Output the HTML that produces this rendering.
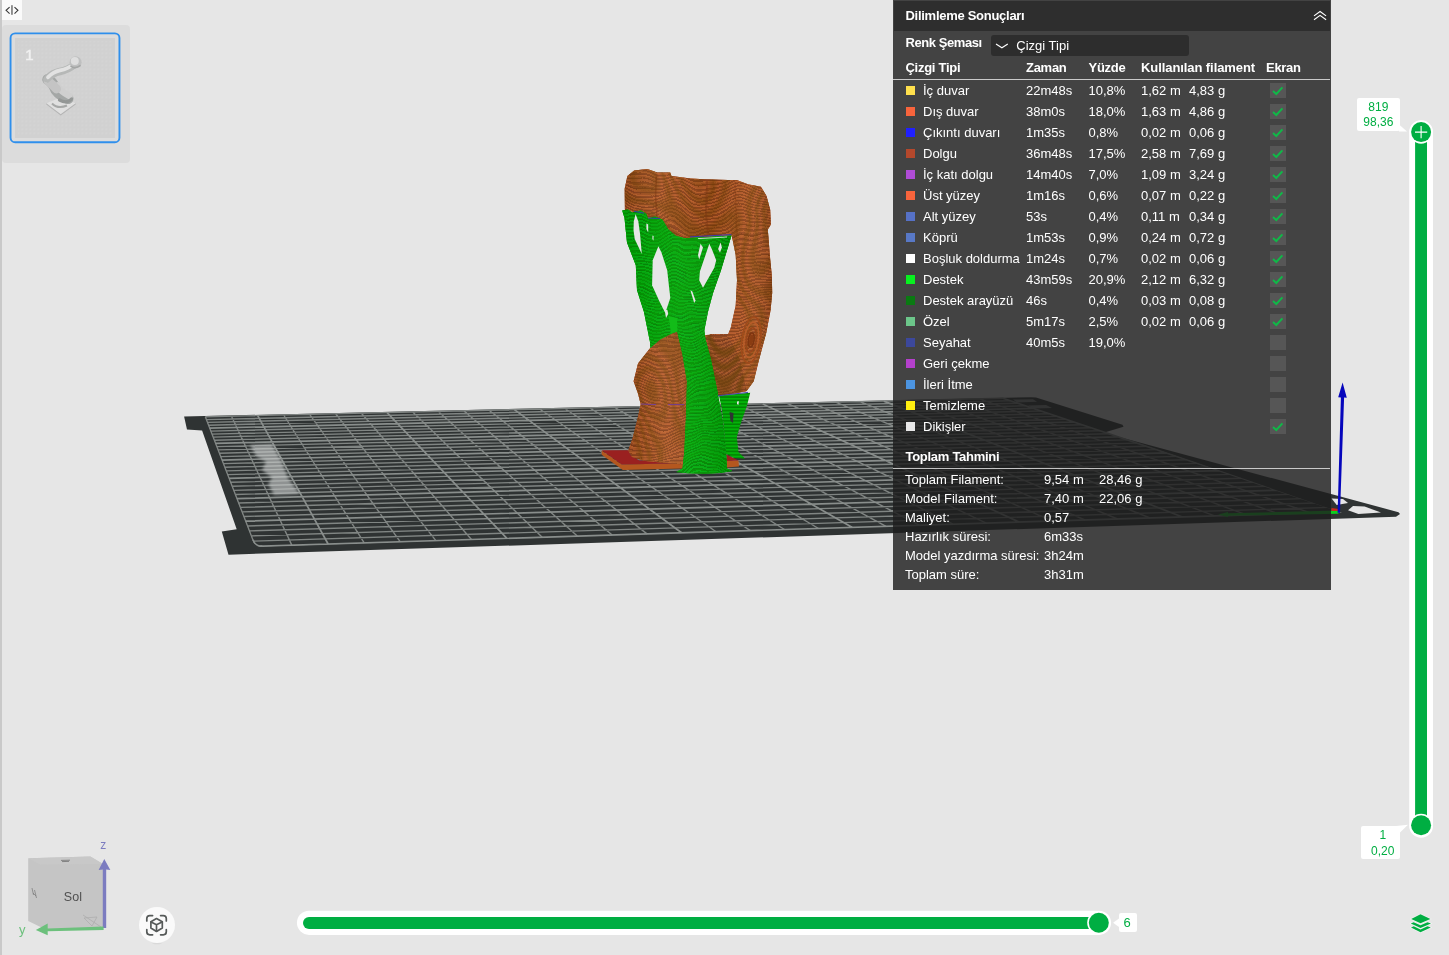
<!DOCTYPE html>
<html lang="tr">
<head>
<meta charset="utf-8">
<title>Önizleme</title>
<style>
*{box-sizing:border-box;margin:0;padding:0}
html,body{width:1449px;height:955px;overflow:hidden;background:#e6e6e6;font-family:"Liberation Sans",sans-serif;}
#app{position:relative;width:1449px;height:955px;overflow:hidden;background:#e6e6e6}
.abs{position:absolute}
#leftstrip{left:0;top:0;width:2px;height:955px;background:#c9c9c9}
#colbtn{left:2px;top:0;width:20px;height:20px;background:#fafafa}
#thumbs{left:2px;top:25px;width:128px;height:138px;background:#dcdcdc;border-radius:4px}
#thumb{left:9.5px;top:32.5px;width:111px;height:111px;border:2px solid #2f8fec;border-radius:5.5px}
#thumbimg{left:15px;top:38px;width:100px;height:100px}
#scene{left:0;top:0;width:1449px;height:955px}
#legend{will-change:transform;left:893px;top:0;width:438px;height:590px;background:rgba(30,30,30,.815);color:#fff;font-size:13px}
#legend .hdr{left:.7px;top:1px;width:436.6px;height:29.8px;background:#2e2e2e}
#legend .t{position:absolute;white-space:nowrap;line-height:16px;height:16px}
#legend .b{font-weight:bold;letter-spacing:-.28px}
#legend .sep{position:absolute;left:0;width:438px;height:1px;background:rgba(255,255,255,.72)}
#legend .sw{position:absolute;left:13px;width:9px;height:9px}
#legend .cb{position:absolute;left:377.3px;width:15.5px;height:15px;background:rgba(255,255,255,.1)}
#legend .cb svg{display:block}
#legend .dd{position:absolute;left:98px;top:35px;width:198px;height:21px;background:#2d2d2d;border-radius:3px}
.g{color:#00ae42}
.lbl{will-change:transform;position:absolute;background:#fff;border-radius:2px;color:#00ae42;font-size:12px;text-align:center;line-height:15px}
</style>
</head>
<body>
<div id="app">
<svg id="scene" class="abs" width="1449" height="955" viewBox="0 0 1449 955">
<defs>
<pattern id="pb" width="6" height="3.4" patternUnits="userSpaceOnUse"><rect width="6" height="3.4" fill="#bc5e2c"/><rect y="1.9" width="6" height="1.5" fill="#853c17"/></pattern>
<pattern id="pg" width="6" height="3.4" patternUnits="userSpaceOnUse"><rect width="6" height="3.4" fill="#04b30a"/><rect y="1.9" width="6" height="1.5" fill="#008202"/></pattern>
<filter id="wav" x="-5%" y="-5%" width="110%" height="110%"><feTurbulence type="fractalNoise" baseFrequency="0.022 0.014" numOctaves="2" seed="4" result="n"/><feDisplacementMap in="SourceGraphic" in2="n" scale="34" xChannelSelector="R" yChannelSelector="G"/></filter>
<filter id="moire" x="0" y="0" width="100%" height="100%"><feTurbulence type="fractalNoise" baseFrequency="0.02 0.014" numOctaves="1" seed="21" result="n"/><feColorMatrix in="n" type="matrix" values="0 0 0 0 0.16  0 0 0 0 0.05  0 0 0 0 0  2.2 0 0 0 -0.6" result="a"/><feComponentTransfer in="a"><feFuncA type="table" tableValues="0 .5 0 .5 0 .5 0 .5 0 .5 0"/></feComponentTransfer></filter>
<filter id="moireg" x="0" y="0" width="100%" height="100%"><feTurbulence type="fractalNoise" baseFrequency="0.024 0.014" numOctaves="1" seed="5" result="n"/><feColorMatrix in="n" type="matrix" values="0 0 0 0 0  0 0 0 0 0.36  0 0 0 0 0  2.2 0 0 0 -0.6" result="a"/><feComponentTransfer in="a"><feFuncA type="table" tableValues="0 .55 0 .55 0 .55 0 .55 0 .55 0"/></feComponentTransfer></filter>
<filter id="wav2" x="-5%" y="-5%" width="110%" height="110%"><feTurbulence type="fractalNoise" baseFrequency="0.03 0.016" numOctaves="2" seed="9" result="n"/><feDisplacementMap in="SourceGraphic" in2="n" scale="30" xChannelSelector="R" yChannelSelector="G"/></filter>
<filter id="bl"><feGaussianBlur stdDeviation="1.6"/></filter>
<linearGradient id="shb" x1="0" x2="1" y1="0" y2="0"><stop offset="0" stop-color="#000" stop-opacity=".10"/><stop offset=".25" stop-color="#fff" stop-opacity=".06"/><stop offset=".6" stop-color="#000" stop-opacity=".06"/><stop offset=".85" stop-color="#fff" stop-opacity=".05"/><stop offset="1" stop-color="#000" stop-opacity=".12"/></linearGradient>
<linearGradient id="shb2" x1="0" x2="1" y1="0" y2="0"><stop offset="0" stop-color="#000" stop-opacity=".08"/><stop offset=".3" stop-color="#fff" stop-opacity=".07"/><stop offset="1" stop-color="#000" stop-opacity=".10"/></linearGradient>
<linearGradient id="shg" x1="0" x2="1" y1="0" y2="0"><stop offset="0" stop-color="#000" stop-opacity=".06"/><stop offset=".5" stop-color="#fff" stop-opacity=".05"/><stop offset="1" stop-color="#000" stop-opacity=".10"/></linearGradient>
<clipPath id="gridclip"><path d="M205.3,416.8 L1003.0,398.3 L1342.0,511.9 L255.4,546.3 Z"/></clipPath>
</defs>
<path d="M184.1,416.5 L1031.0,397.2 L1036.0,397.6 L1122.5,424.8 L1123.5,426.8 L1103.5,432.8 L1398.5,512.2 L1400.0,514.0 L1396.0,516.8 L228.5,554.7 L221.8,531.6 L236.7,529.2 L202.1,430.6 L187.0,429.6 Z" fill="#2f3333"/>
<path d="M1331.6,498.4 L1343,499 L1348,503 L1336.7,505 Z" fill="#e6e6e6"/>
<path d="M1353,506 L1364.6,506.6 L1381,512.4 L1358.4,514 L1348,510.3 Z" fill="#e6e6e6"/>
<path d="M1013,399.6 L1033,399.2 L1037,401.8 L1017,402.4 Z" fill="#8a8e8e"/>
<path d="M1028,405.4 L1046,405 L1052,408 L1034,408.6 Z" fill="#8a8e8e"/>
<clipPath id="gclip"><path d="M203.3,414.8 L1006.0,396.3 L1345.0,513.9 L262.4,547.3 Q254.8,546.9 251.7,539.7 Z"/></clipPath>
<g clip-path="url(#gclip)">
<path d="M205.3,416.8 L255.4,546.3 M231.5,416.2 L291.8,545.1 M283.7,415.0 L364.2,542.9 M309.7,414.4 L400.1,541.7 M335.6,413.8 L435.9,540.6 M361.4,413.2 L471.5,539.5 M412.7,412.0 L542.2,537.2 M438.3,411.4 L577.3,536.1 M463.7,410.8 L612.2,535.0 M489.1,410.2 L647.0,533.9 M539.6,409.0 L716.1,531.7 M564.7,408.5 L750.4,530.6 M589.7,407.9 L784.5,529.5 M614.7,407.3 L818.5,528.5 M664.4,406.2 L886.0,526.3 M689.1,405.6 L919.6,525.3 M713.7,405.0 L952.9,524.2 M738.2,404.4 L986.2,523.2 M787.1,403.3 L1052.2,521.1 M811.4,402.7 L1085.0,520.0 M835.6,402.2 L1117.6,519.0 M859.8,401.6 L1150.1,518.0 M907.8,400.5 L1214.6,515.9 M931.7,400.0 L1246.7,514.9 M955.6,399.4 L1278.6,513.9 M979.3,398.8 L1310.4,512.9 M205.3,416.8 L1003.0,398.3 M206.4,419.6 L1010.4,400.8 M207.4,422.4 L1017.8,403.3 M208.6,425.2 L1025.4,405.8 M210.8,431.1 L1041.0,411.0 M212.0,434.1 L1049.0,413.7 M213.2,437.1 L1057.1,416.4 M214.4,440.2 L1065.3,419.2 M216.8,446.6 L1082.2,424.8 M218.1,449.9 L1090.9,427.7 M219.4,453.2 L1099.7,430.7 M220.7,456.6 L1108.7,433.7 M223.4,463.6 L1127.1,439.9 M224.8,467.2 L1136.6,443.1 M226.2,470.9 L1146.2,446.3 M227.7,474.6 L1156.1,449.6 M230.7,482.3 L1176.3,456.4 M232.2,486.3 L1186.6,459.8 M233.8,490.4 L1197.2,463.4 M235.4,494.5 L1208.0,467.0 M238.7,503.0 L1230.2,474.4 M240.4,507.4 L1241.7,478.3 M242.1,511.9 L1253.3,482.2 M243.9,516.5 L1265.2,486.2 M247.5,526.0 L1289.8,494.4 M249.4,530.9 L1302.4,498.6 M251.4,535.9 L1315.3,503.0 M253.4,541.1 L1328.5,507.4" fill="none" stroke="#808583" stroke-width="1.4"/>
<path d="M257.7,415.6 L328.1,544.0 M387.1,412.6 L506.9,538.3 M514.4,409.6 L681.6,532.8 M639.6,406.7 L852.4,527.4 M762.7,403.9 L1019.2,522.1 M883.8,401.1 L1182.4,517.0 M1003.0,398.3 L1342.0,511.9 M209.7,428.1 L1033.1,408.4 M215.6,443.4 L1073.7,422.0 M222.0,460.1 L1117.8,436.8 M229.1,478.4 L1166.1,452.9 M237.0,498.7 L1219.0,470.7 M245.7,521.2 L1277.4,490.2 M255.4,546.3 L1342.0,511.9" fill="none" stroke="#898e8c" stroke-width="1.7"/>
</g>
<path d="M262.4,546.1 Q255.4,546.3 252.9,539.7" fill="none" stroke="#898e8c" stroke-width="1.5"/>
<path d="M250,445 L272,444 L282,462 L288,478 L300,494 L274,495 L268,484 L272,478 L262,470 L266,462 L256,456 Z" fill="#cfd2d1" opacity=".6" filter="url(#bl)"/>
<g id="model">
<path d="M601.7,450.6 L621.7,464.6 L682.7,463.2 L726.7,461.1 L738.5,460.5 L739.0,466.4 L726.7,467.4 L682.7,468.6 L622.9,469.9 L601.7,454.8 Z" fill="#b4571f"/>
<path d="M601.7,450.3 L628.7,450.3 L630.5,455.2 L639.3,460.5 L682.7,459.9 L682.7,463.2 L621.7,464.6 Z" fill="#9a2020"/>
<path d="M726.2,454.6 L738.5,460.5 L726.7,461.1 Z" fill="#9a2020"/>
<path d="M719.0,395.5 L750.2,392.8 L746.9,406.0 L741.0,422.7 L736.8,437.0 L738.5,452.0 L745.2,458.7 L734.0,458.0 L726.0,453.7 L724.0,430.0 L722.0,410.0 Z" fill="url(#pg)"/>
<path d="M729.5,412.0 L733.5,413.0 L733.0,423.0 L730.5,421.0 Z" fill="#2f3333"/>
<path d="M737.0,401.5 L739.0,401.3 L738.4,405.0 L737.0,404.0 Z" fill="#e6e6e6"/>
<clipPath id="ctop"><path d="M624.9,209.7 L624.7,188.6 L627.4,176.1 L634.2,170.6 L647.3,168.9 L657.2,172.4 L670.2,172.4 L671.5,176.1 L690.7,178.6 L704.4,179.3 L728.0,179.9 L736.7,179.9 L747.9,184.2 L760.9,186.7 L766.5,196.0 L770.2,209.7 L770.9,224.6 L767.8,229.6 L770.2,259.4 L771.8,275.0 L772.2,292.8 L770.6,310.0 L766.2,333.1 L759.0,359.8 L753.7,381.2 L746.6,391.0 L735.0,393.5 L718.0,395.4 L716.0,388.0 L712.0,370.0 L706.0,352.0 L704.0,338.0 L710.6,334.3 L728.1,334.3 L730.7,328.0 L735.7,305.4 L737.0,280.3 L735.7,255.1 L731.9,236.3 L730.5,235.2 L697.0,237.6 L684.5,238.3 L675.8,235.8 L668.4,229.6 L662.2,219.6 L647.3,217.8 L634.8,212.2 Z"/></clipPath>
<path d="M624.9,209.7 L624.7,188.6 L627.4,176.1 L634.2,170.6 L647.3,168.9 L657.2,172.4 L670.2,172.4 L671.5,176.1 L690.7,178.6 L704.4,179.3 L728.0,179.9 L736.7,179.9 L747.9,184.2 L760.9,186.7 L766.5,196.0 L770.2,209.7 L770.9,224.6 L767.8,229.6 L770.2,259.4 L771.8,275.0 L772.2,292.8 L770.6,310.0 L766.2,333.1 L759.0,359.8 L753.7,381.2 L746.6,391.0 L735.0,393.5 L718.0,395.4 L716.0,388.0 L712.0,370.0 L706.0,352.0 L704.0,338.0 L710.6,334.3 L728.1,334.3 L730.7,328.0 L735.7,305.4 L737.0,280.3 L735.7,255.1 L731.9,236.3 L730.5,235.2 L697.0,237.6 L684.5,238.3 L675.8,235.8 L668.4,229.6 L662.2,219.6 L647.3,217.8 L634.8,212.2 Z" fill="#a85024"/>
<g clip-path="url(#ctop)"><rect x="600" y="150" width="200" height="270" fill="url(#pb)" filter="url(#wav)"/></g>
<clipPath id="clow"><path d="M728.1,334.3 L705.7,334.9 L677.9,331.8 L672.8,333.0 L660.3,339.3 L650.2,348.1 L638.0,363.4 L633.6,381.2 L638.0,393.6 L640.7,404.3 L637.2,420.3 L632.7,438.1 L628.3,450.6 L632.0,457.0 L645.0,461.0 L683.0,464.5 L722.0,462.0 L721.0,440.0 L718.5,410.0 L717.0,395.4 L735.0,393.0 L746.6,391.0 L740.0,360.0 Z"/></clipPath>
<path d="M728.1,334.3 L705.7,334.9 L677.9,331.8 L672.8,333.0 L660.3,339.3 L650.2,348.1 L638.0,363.4 L633.6,381.2 L638.0,393.6 L640.7,404.3 L637.2,420.3 L632.7,438.1 L628.3,450.6 L632.0,457.0 L645.0,461.0 L683.0,464.5 L722.0,462.0 L721.0,440.0 L718.5,410.0 L717.0,395.4 L735.0,393.0 L746.6,391.0 L740.0,360.0 Z" fill="#a85024"/>
<g clip-path="url(#clow)"><rect x="600" y="310" width="200" height="180" fill="url(#pb)" filter="url(#wav)"/></g>
<g clip-path="url(#ctop)"><rect x="600" y="150" width="200" height="270" fill="#000" filter="url(#moire)"/></g>
<g clip-path="url(#clow)"><rect x="600" y="310" width="200" height="180" fill="#000" filter="url(#moire)"/></g>
<path d="M624.9,209.7 L624.7,188.6 L627.4,176.1 L634.2,170.6 L647.3,168.9 L657.2,172.4 L670.2,172.4 L671.5,176.1 L690.7,178.6 L704.4,179.3 L728.0,179.9 L736.7,179.9 L747.9,184.2 L760.9,186.7 L766.5,196.0 L770.2,209.7 L770.9,224.6 L767.8,229.6 L770.2,259.4 L771.8,275.0 L772.2,292.8 L770.6,310.0 L766.2,333.1 L759.0,359.8 L753.7,381.2 L746.6,391.0 L735.0,393.5 L718.0,395.4 L716.0,388.0 L712.0,370.0 L706.0,352.0 L704.0,338.0 L710.6,334.3 L728.1,334.3 L730.7,328.0 L735.7,305.4 L737.0,280.3 L735.7,255.1 L731.9,236.3 L730.5,235.2 L697.0,237.6 L684.5,238.3 L675.8,235.8 L668.4,229.6 L662.2,219.6 L647.3,217.8 L634.8,212.2 Z" fill="url(#shb)"/>
<path d="M728.1,334.3 L705.7,334.9 L677.9,331.8 L672.8,333.0 L660.3,339.3 L650.2,348.1 L638.0,363.4 L633.6,381.2 L638.0,393.6 L640.7,404.3 L637.2,420.3 L632.7,438.1 L628.3,450.6 L632.0,457.0 L645.0,461.0 L683.0,464.5 L722.0,462.0 L721.0,440.0 L718.5,410.0 L717.0,395.4 L735.0,393.0 L746.6,391.0 L740.0,360.0 Z" fill="url(#shb2)"/>
<path d="M656.5,174 L655.5,196 L657,217" stroke="#7a3612" stroke-width="1.6" fill="none" opacity=".45"/>
<path d="M707,181 L706,215 L708.5,236" stroke="#7a3612" stroke-width="2" fill="none" opacity=".45"/>
<path d="M735,182 L737,236" stroke="#7a3612" stroke-width="1.4" fill="none" opacity=".3"/>
<ellipse cx="751.2" cy="340" rx="9.3" ry="23.2" fill="none" stroke="#a04a1a" stroke-width="1.6" transform="rotate(8 751.2 340)"/>
<ellipse cx="751.2" cy="340" rx="7.1" ry="17.8" fill="none" stroke="#b85c28" stroke-width="1.6" transform="rotate(8 751.2 340)"/>
<ellipse cx="751.2" cy="340" rx="5.0" ry="12.4" fill="none" stroke="#9a4518" stroke-width="1.6" transform="rotate(8 751.2 340)"/>
<ellipse cx="751.2" cy="340" rx="2.8" ry="7.0" fill="none" stroke="#7e3510" stroke-width="1.6" transform="rotate(8 751.2 340)"/>
<ellipse cx="751.2" cy="340" rx="2" ry="5.5" fill="#8a3c12" transform="rotate(8 751.2 340)"/>
<clipPath id="cgr"><path d="M622.2,210.5 L628.0,209.5 L632.0,212.5 L635.6,211.4 L641.0,210.5 L646.3,214.0 L648.0,218.5 L655.0,216.5 L662.3,219.6 L668.4,229.6 L675.8,235.8 L684.5,238.3 L697.0,237.6 L731.3,235.6 L731.3,236.3 L725.6,255.1 L720.6,271.5 L713.1,292.8 L708.0,311.7 L704.3,330.6 L705.5,339.4 L711.0,359.8 L717.2,390.0 L722.6,420.3 L726.1,452.3 L727.0,468.4 L732.3,471.0 L720.0,473.0 L703.9,473.7 L688.0,473.2 L676.3,472.0 L682.5,468.4 L684.3,452.3 L686.0,416.8 L687.0,381.2 L682.5,354.5 L677.2,331.4 L672.8,333.0 L660.3,339.3 L650.2,348.1 L650.2,343.1 L643.9,311.7 L637.0,290.3 L635.8,265.2 L627.0,242.6 L625.7,230.0 L624.5,218.0 Z"/></clipPath>
<path d="M622.2,210.5 L628.0,209.5 L632.0,212.5 L635.6,211.4 L641.0,210.5 L646.3,214.0 L648.0,218.5 L655.0,216.5 L662.3,219.6 L668.4,229.6 L675.8,235.8 L684.5,238.3 L697.0,237.6 L731.3,235.6 L731.3,236.3 L725.6,255.1 L720.6,271.5 L713.1,292.8 L708.0,311.7 L704.3,330.6 L705.5,339.4 L711.0,359.8 L717.2,390.0 L722.6,420.3 L726.1,452.3 L727.0,468.4 L732.3,471.0 L720.0,473.0 L703.9,473.7 L688.0,473.2 L676.3,472.0 L682.5,468.4 L684.3,452.3 L686.0,416.8 L687.0,381.2 L682.5,354.5 L677.2,331.4 L672.8,333.0 L660.3,339.3 L650.2,348.1 L650.2,343.1 L643.9,311.7 L637.0,290.3 L635.8,265.2 L627.0,242.6 L625.7,230.0 L624.5,218.0 Z" fill="#00a000"/>
<g clip-path="url(#cgr)"><rect x="600" y="190" width="160" height="300" fill="url(#pg)" filter="url(#wav2)"/></g>
<g clip-path="url(#cgr)"><rect x="600" y="190" width="160" height="300" fill="#000" filter="url(#moireg)"/></g>
<path d="M622.2,210.5 L628.0,209.5 L632.0,212.5 L635.6,211.4 L641.0,210.5 L646.3,214.0 L648.0,218.5 L655.0,216.5 L662.3,219.6 L668.4,229.6 L675.8,235.8 L684.5,238.3 L697.0,237.6 L731.3,235.6 L731.3,236.3 L725.6,255.1 L720.6,271.5 L713.1,292.8 L708.0,311.7 L704.3,330.6 L705.5,339.4 L711.0,359.8 L717.2,390.0 L722.6,420.3 L726.1,452.3 L727.0,468.4 L732.3,471.0 L720.0,473.0 L703.9,473.7 L688.0,473.2 L676.3,472.0 L682.5,468.4 L684.3,452.3 L686.0,416.8 L687.0,381.2 L682.5,354.5 L677.2,331.4 L672.8,333.0 L660.3,339.3 L650.2,348.1 L650.2,343.1 L643.9,311.7 L637.0,290.3 L635.8,265.2 L627.0,242.6 L625.7,230.0 L624.5,218.0 Z" fill="url(#shg)"/>
<path d="M658.4,246.3 L652.7,260.2 L652.1,285.3 L659.0,300.4 L665.3,313.0 L670.3,297.9 L667.2,270.2 L661.5,252.6 Z" fill="#e6e6e6"/>
<path d="M700.5,243.8 L698.0,255.1 L699.2,259.5 L703.0,247.6 Z" fill="#e6e6e6"/>
<path d="M720.6,242.6 L718.1,248.9 L720.0,252.6 L721.9,247.6 Z" fill="#e6e6e6"/>
<path d="M709.3,243.8 L705.5,255.1 L699.9,271.5 L699.2,280.3 L703.0,287.8 L714.3,267.7 L716.2,260.2 L711.8,248.9 Z" fill="#e6e6e6"/>
<path d="M690.4,290.3 L694.2,302.9 L695.5,300.4 L692.3,291.6 Z" fill="#e6e6e6"/>
<path d="M633.8,221.2 L635.6,214.1 L638.3,221.2 L640.0,233.6 L641.8,254.1 L634.7,239.0 L633.5,230.1 Z" fill="#e6e6e6"/>
<path d="M652.5,235.4 L653.6,236.0 L653.4,240.7 L652.4,239.0 Z" fill="#e6e6e6"/>
<path d="M646.4,223.5 L648.2,224.5 L648.2,232.5 L646.4,229.0 Z" fill="#e6e6e6"/>
<path d="M664.7,310.0 L667.4,310.0 L668.2,314.0 L666.0,318.0 Z" fill="#e6e6e6"/>
<path d="M668.5,316.0 L677.0,318.0 L677.4,331.5 L671.0,333.5 Z" fill="#12bc18"/>
<path d="M690,236.9 L731.5,234.6" stroke="#3838b0" stroke-width="1" fill="none"/>
<path d="M698,238.6 L727,237" stroke="#f0f0f0" stroke-width=".8" fill="none"/>
<path d="M634,211.3 L644,213.2 M648,218 L660,218.6" stroke="#3838b0" stroke-width=".9" fill="none"/>
<path d="M641,404 L656,404.6 M668,404.6 L684,404.6" stroke="#6a3ab0" stroke-width=".8" fill="none"/>
<path d="M718,395.8 L748,392.4" stroke="#3838b0" stroke-width=".9" fill="none"/>
</g>
<path d="M1218,514.6 L1228,512 L1228,513.3 L1338.4,510.6 L1338.4,513.8 L1228,515.8 L1228,517 Z" fill="#0bd020"/>
<path d="M1331.5,508 L1338.6,509 L1338.6,511 L1331.5,511 Z" fill="#c8281c"/>
<path d="M1337.6,512.8 L1340,512.8 L1344.1,397.5 L1346.8,397.8 L1342.6,382.4 L1338.2,397.2 L1340.9,397.4 Z" fill="#0606bc"/>
</svg>
<div id="leftstrip" class="abs"></div>
<div id="colbtn" class="abs"><svg width="20" height="20" viewBox="2 0 20 20" style="display:block"><path d="M9.6 7.1 L6.1 10.3 L9.6 13.6 M14.5 7.1 L17.9 10.3 L14.5 13.6" fill="none" stroke="#3a3a3a" stroke-width="1.15"/><rect x="11" y="5.2" width="1.9" height="9.6" fill="#8c8c8c"/></svg></div>
<div id="thumbs" class="abs"></div>
<svg id="thumbimg" class="abs" style="will-change:transform" width="100" height="100" viewBox="15 38 100 100">
<defs><pattern id="dots" x="15.4" y="38.4" width="4" height="4" patternUnits="userSpaceOnUse"><rect x="2.4" y="2.4" width="1.1" height="1.1" fill="#dbdbdb"/></pattern></defs>
<rect x="15" y="38" width="100" height="100" fill="#d1d1d1"/>
<rect x="18" y="41" width="94" height="94" fill="url(#dots)"/>
<text x="25.2" y="60" font-size="15" fill="#f0f0f0" stroke="#f0f0f0" stroke-width=".5" font-family="Liberation Sans, sans-serif">1</text>
<path d="M46.3 103.3 L60.7 97.5 L75.7 103.3 L60.7 114.2 Z" fill="#e0e0e0"/>
<path d="M46.3 103.3 L60.7 114.2 L75.7 103.3 L75.7 104.6 L60.7 115.6 L46.3 104.6 Z" fill="#b4b4b4"/>
<path d="M52 103.5 Q58 109.5 67 105.5" fill="none" stroke="#a6a8a7" stroke-width="2"/>
<path d="M68 98.5 Q57 95 53.5 85 Q50.5 80.5 47.8 79.5" fill="none" stroke="#a4a7a6" stroke-width="11" stroke-linecap="round"/>
<path d="M69.5 96 Q61 92 57.5 85.5" fill="none" stroke="#cfcfcf" stroke-width="6.5" stroke-linecap="round"/>
<path d="M71.5 99 Q67 104 59.5 100" fill="none" stroke="#949796" stroke-width="3.2" stroke-linecap="round"/>
<path d="M48 81 Q52.5 84.5 56.5 89" fill="none" stroke="#c4c4c4" stroke-width="9" stroke-linecap="round"/>
<path d="M46.6 82 Q45.2 80 46.4 77.6" fill="none" stroke="#e4e4e4" stroke-width="2" stroke-linecap="round"/>
<path d="M47 79 Q52 73 60 71.5 Q68 70 74 65" fill="none" stroke="#b6b8b7" stroke-width="7.4" stroke-linecap="round"/>
<path d="M48 77.3 Q53 71.8 60 70.3 Q68 68.8 73 64.3" fill="none" stroke="#e2e2e2" stroke-width="3.8" stroke-linecap="round"/>
<circle cx="75.6" cy="62.2" r="6" fill="#bfc0c0"/>
<circle cx="74.8" cy="61" r="4" fill="#dedede"/>
<path d="M70.5 66 Q75 69.6 80.6 65.4" fill="none" stroke="#a4a6a5" stroke-width="1.6"/>
</svg>
<svg class="abs" style="left:5px;top:28px" width="120" height="120" viewBox="5 28 120 120"><rect x="10.55" y="33.4" width="108.9" height="108.9" rx="4.6" fill="none" stroke="#2f8fec" stroke-width="1.9"/></svg>
<div id="legend" class="abs">
<div class="hdr abs"></div>
<div class="t b" style="left:12.5px;top:7.6px">Dilimleme Sonuçları</div>
<svg class="abs" style="left:418px;top:8px" width="18" height="15" viewBox="1311 8 18 15"><path d="M1314 15.9 L1320.05 11.5 L1326.1 15.9 M1314 19.8 L1320.05 15.4 L1326.1 19.8" fill="none" stroke="#fff" stroke-width="1.15"/></svg>
<div class="t b" style="left:12.5px;top:35.2px;letter-spacing:-.42px">Renk Şeması</div>
<div class="dd"></div>
<svg class="abs" style="left:100px;top:40px" width="18" height="12" viewBox="993 40 18 12"><path d="M996 44.1 L1001.9 47.8 L1007.8 44.1" fill="none" stroke="#fff" stroke-width="1.15"/></svg>
<div class="t" style="left:123.3px;top:38.3px">Çizgi Tipi</div>
<div class="t b" style="left:12.5px;top:59.9px">Çizgi Tipi</div>
<div class="t b" style="left:133px;top:59.9px">Zaman</div>
<div class="t b" style="left:195.5px;top:59.9px">Yüzde</div>
<div class="t b" style="left:248px;top:59.9px;letter-spacing:-.08px">Kullanılan filament</div>
<div class="t b" style="left:373px;top:59.9px">Ekran</div>
<div class="sep" style="top:79px;width:436.5px"></div>
<div class="sw" style="top:86.2px;background:#ffe04d"></div>
<div class="t" style="left:30px;top:82.6px">İç duvar</div>
<div class="t" style="left:133px;top:82.6px">22m48s</div>
<div class="t" style="left:195.5px;top:82.6px">10,8%</div>
<div class="t" style="left:248px;top:82.6px">1,62 m</div>
<div class="t" style="left:296px;top:82.6px">4,83 g</div>
<div class="cb" style="top:83.0px"><svg width="15.5" height="15" viewBox="0 0 15.5 15"><path d="M3 8 L6.3 11 L12.4 4.4" fill="none" stroke="#10b848" stroke-width="2"/></svg></div>
<div class="sw" style="top:107.2px;background:#f8643c"></div>
<div class="t" style="left:30px;top:103.6px">Dış duvar</div>
<div class="t" style="left:133px;top:103.6px">38m0s</div>
<div class="t" style="left:195.5px;top:103.6px">18,0%</div>
<div class="t" style="left:248px;top:103.6px">1,63 m</div>
<div class="t" style="left:296px;top:103.6px">4,86 g</div>
<div class="cb" style="top:104.0px"><svg width="15.5" height="15" viewBox="0 0 15.5 15"><path d="M3 8 L6.3 11 L12.4 4.4" fill="none" stroke="#10b848" stroke-width="2"/></svg></div>
<div class="sw" style="top:128.2px;background:#2020ff"></div>
<div class="t" style="left:30px;top:124.6px">Çıkıntı duvarı</div>
<div class="t" style="left:133px;top:124.6px">1m35s</div>
<div class="t" style="left:195.5px;top:124.6px">0,8%</div>
<div class="t" style="left:248px;top:124.6px">0,02 m</div>
<div class="t" style="left:296px;top:124.6px">0,06 g</div>
<div class="cb" style="top:125.0px"><svg width="15.5" height="15" viewBox="0 0 15.5 15"><path d="M3 8 L6.3 11 L12.4 4.4" fill="none" stroke="#10b848" stroke-width="2"/></svg></div>
<div class="sw" style="top:149.2px;background:#b4482c"></div>
<div class="t" style="left:30px;top:145.6px">Dolgu</div>
<div class="t" style="left:133px;top:145.6px">36m48s</div>
<div class="t" style="left:195.5px;top:145.6px">17,5%</div>
<div class="t" style="left:248px;top:145.6px">2,58 m</div>
<div class="t" style="left:296px;top:145.6px">7,69 g</div>
<div class="cb" style="top:146.0px"><svg width="15.5" height="15" viewBox="0 0 15.5 15"><path d="M3 8 L6.3 11 L12.4 4.4" fill="none" stroke="#10b848" stroke-width="2"/></svg></div>
<div class="sw" style="top:170.2px;background:#b04cd6"></div>
<div class="t" style="left:30px;top:166.6px">İç katı dolgu</div>
<div class="t" style="left:133px;top:166.6px">14m40s</div>
<div class="t" style="left:195.5px;top:166.6px">7,0%</div>
<div class="t" style="left:248px;top:166.6px">1,09 m</div>
<div class="t" style="left:296px;top:166.6px">3,24 g</div>
<div class="cb" style="top:167.0px"><svg width="15.5" height="15" viewBox="0 0 15.5 15"><path d="M3 8 L6.3 11 L12.4 4.4" fill="none" stroke="#10b848" stroke-width="2"/></svg></div>
<div class="sw" style="top:191.2px;background:#f8643c"></div>
<div class="t" style="left:30px;top:187.6px">Üst yüzey</div>
<div class="t" style="left:133px;top:187.6px">1m16s</div>
<div class="t" style="left:195.5px;top:187.6px">0,6%</div>
<div class="t" style="left:248px;top:187.6px">0,07 m</div>
<div class="t" style="left:296px;top:187.6px">0,22 g</div>
<div class="cb" style="top:188.0px"><svg width="15.5" height="15" viewBox="0 0 15.5 15"><path d="M3 8 L6.3 11 L12.4 4.4" fill="none" stroke="#10b848" stroke-width="2"/></svg></div>
<div class="sw" style="top:212.2px;background:#5671c6"></div>
<div class="t" style="left:30px;top:208.6px">Alt yüzey</div>
<div class="t" style="left:133px;top:208.6px">53s</div>
<div class="t" style="left:195.5px;top:208.6px">0,4%</div>
<div class="t" style="left:248px;top:208.6px">0,11 m</div>
<div class="t" style="left:296px;top:208.6px">0,34 g</div>
<div class="cb" style="top:209.0px"><svg width="15.5" height="15" viewBox="0 0 15.5 15"><path d="M3 8 L6.3 11 L12.4 4.4" fill="none" stroke="#10b848" stroke-width="2"/></svg></div>
<div class="sw" style="top:233.2px;background:#5878c6"></div>
<div class="t" style="left:30px;top:229.6px">Köprü</div>
<div class="t" style="left:133px;top:229.6px">1m53s</div>
<div class="t" style="left:195.5px;top:229.6px">0,9%</div>
<div class="t" style="left:248px;top:229.6px">0,24 m</div>
<div class="t" style="left:296px;top:229.6px">0,72 g</div>
<div class="cb" style="top:230.0px"><svg width="15.5" height="15" viewBox="0 0 15.5 15"><path d="M3 8 L6.3 11 L12.4 4.4" fill="none" stroke="#10b848" stroke-width="2"/></svg></div>
<div class="sw" style="top:254.2px;background:#ffffff"></div>
<div class="t" style="left:30px;top:250.6px">Boşluk doldurma</div>
<div class="t" style="left:133px;top:250.6px">1m24s</div>
<div class="t" style="left:195.5px;top:250.6px">0,7%</div>
<div class="t" style="left:248px;top:250.6px">0,02 m</div>
<div class="t" style="left:296px;top:250.6px">0,06 g</div>
<div class="cb" style="top:251.0px"><svg width="15.5" height="15" viewBox="0 0 15.5 15"><path d="M3 8 L6.3 11 L12.4 4.4" fill="none" stroke="#10b848" stroke-width="2"/></svg></div>
<div class="sw" style="top:275.2px;background:#08f020"></div>
<div class="t" style="left:30px;top:271.6px">Destek</div>
<div class="t" style="left:133px;top:271.6px">43m59s</div>
<div class="t" style="left:195.5px;top:271.6px">20,9%</div>
<div class="t" style="left:248px;top:271.6px">2,12 m</div>
<div class="t" style="left:296px;top:271.6px">6,32 g</div>
<div class="cb" style="top:272.0px"><svg width="15.5" height="15" viewBox="0 0 15.5 15"><path d="M3 8 L6.3 11 L12.4 4.4" fill="none" stroke="#10b848" stroke-width="2"/></svg></div>
<div class="sw" style="top:296.2px;background:#0a7a12"></div>
<div class="t" style="left:30px;top:292.6px">Destek arayüzü</div>
<div class="t" style="left:133px;top:292.6px">46s</div>
<div class="t" style="left:195.5px;top:292.6px">0,4%</div>
<div class="t" style="left:248px;top:292.6px">0,03 m</div>
<div class="t" style="left:296px;top:292.6px">0,08 g</div>
<div class="cb" style="top:293.0px"><svg width="15.5" height="15" viewBox="0 0 15.5 15"><path d="M3 8 L6.3 11 L12.4 4.4" fill="none" stroke="#10b848" stroke-width="2"/></svg></div>
<div class="sw" style="top:317.2px;background:#6cc68a"></div>
<div class="t" style="left:30px;top:313.6px">Özel</div>
<div class="t" style="left:133px;top:313.6px">5m17s</div>
<div class="t" style="left:195.5px;top:313.6px">2,5%</div>
<div class="t" style="left:248px;top:313.6px">0,02 m</div>
<div class="t" style="left:296px;top:313.6px">0,06 g</div>
<div class="cb" style="top:314.0px"><svg width="15.5" height="15" viewBox="0 0 15.5 15"><path d="M3 8 L6.3 11 L12.4 4.4" fill="none" stroke="#10b848" stroke-width="2"/></svg></div>
<div class="sw" style="top:338.2px;background:#3c489c"></div>
<div class="t" style="left:30px;top:334.6px">Seyahat</div>
<div class="t" style="left:133px;top:334.6px">40m5s</div>
<div class="t" style="left:195.5px;top:334.6px">19,0%</div>
<div class="cb" style="top:335.0px"></div>
<div class="sw" style="top:359.2px;background:#b440cc"></div>
<div class="t" style="left:30px;top:355.6px">Geri çekme</div>
<div class="cb" style="top:356.0px"></div>
<div class="sw" style="top:380.2px;background:#4c94e0"></div>
<div class="t" style="left:30px;top:376.6px">İleri İtme</div>
<div class="cb" style="top:377.0px"></div>
<div class="sw" style="top:401.2px;background:#ffee10"></div>
<div class="t" style="left:30px;top:397.6px">Temizleme</div>
<div class="cb" style="top:398.0px"></div>
<div class="sw" style="top:422.2px;background:#e8e8e8"></div>
<div class="t" style="left:30px;top:418.6px">Dikişler</div>
<div class="cb" style="top:419.0px"><svg width="15.5" height="15" viewBox="0 0 15.5 15"><path d="M3 8 L6.3 11 L12.4 4.4" fill="none" stroke="#10b848" stroke-width="2"/></svg></div>
<div class="t" style="left:12px;top:471.6px">Toplam Filament:</div>
<div class="t" style="left:151px;top:471.6px">9,54 m</div>
<div class="t" style="left:206px;top:471.6px">28,46 g</div>
<div class="t" style="left:12px;top:490.6px">Model Filament:</div>
<div class="t" style="left:151px;top:490.6px">7,40 m</div>
<div class="t" style="left:206px;top:490.6px">22,06 g</div>
<div class="t" style="left:12px;top:509.6px">Maliyet:</div>
<div class="t" style="left:151px;top:509.6px">0,57</div>
<div class="t" style="left:12px;top:528.6px">Hazırlık süresi:</div>
<div class="t" style="left:151px;top:528.6px">6m33s</div>
<div class="t" style="left:12px;top:547.6px">Model yazdırma süresi:</div>
<div class="t" style="left:151px;top:547.6px">3h24m</div>
<div class="t" style="left:12px;top:566.6px">Toplam süre:</div>
<div class="t" style="left:151px;top:566.6px">3h31m</div>
<div class="t b" style="left:12.5px;top:449.2px">Toplam Tahmini</div>
<div class="sep" style="top:468px;width:436.5px"></div>
</div>
<!-- vertical layer slider -->
<svg class="abs" style="left:1350px;top:90px" width="99" height="780" viewBox="1350 90 99 780">
<rect x="1409.2" y="120.2" width="23.8" height="717.6" rx="11.9" fill="#fff"/>
<rect x="1415.1" y="132" width="11.9" height="693" fill="#00ae42"/>
<circle cx="1421.1" cy="132.1" r="11.6" fill="#fff"/>
<circle cx="1421.1" cy="132.1" r="10" fill="#00ae42"/>
<path d="M1415 132.1 H1427.2 M1421.1 126 V138.2" stroke="#fff" stroke-width="1.1" fill="none"/>
<circle cx="1421.1" cy="825.3" r="11.6" fill="#fff"/>
<circle cx="1421.1" cy="825.3" r="10" fill="#00ae42"/>
<path d="M1399 124.5 L1407 131.6 L1399 131.6 Z" fill="#fff"/>
<path d="M1399 833.5 L1408 824.8 L1396 826 Z" fill="#fff"/>
</svg>
<div class="lbl" style="left:1357px;top:98.2px;width:42.7px;height:33.4px;padding-top:1.9px;line-height:15.5px">819<br>98,36</div>
<div class="lbl" style="left:1361.2px;top:825.8px;width:38.5px;height:33.4px;padding-top:2.2px;padding-left:5px;line-height:15.5px">1<br>0,20</div>
<!-- layers icon -->
<svg class="abs" style="left:1405px;top:908px" width="32" height="30" viewBox="1405 908 32 30">
<g fill="#00ae42" stroke="#fff" stroke-opacity=".55" stroke-width="1.2" paint-order="stroke">
<path d="M1411.2 918.9 L1420.5 914.3 L1430.4 918.9 L1420.5 923.3 Z"/>
<path d="M1410.8 923.5 L1413.6 922.2 L1420.5 925.3 L1427.5 922.2 L1431 923.5 L1420.5 927.9 Z"/>
<path d="M1411 927.5 L1413.7 926.3 L1420.5 929.4 L1427.5 926.3 L1430.8 927.5 L1420.5 932.3 Z"/>
</g>
</svg>
<!-- horizontal move slider -->
<svg class="abs" style="left:290px;top:905px" width="860" height="36" viewBox="290 905 860 36">
<rect x="296.9" y="910.7" width="814.2" height="24.2" rx="12.1" fill="#fff"/>
<rect x="303" y="916.9" width="796" height="12.1" rx="6" fill="#00ae42"/>
<circle cx="1098.8" cy="922.8" r="11.6" fill="#fff"/>
<circle cx="1098.8" cy="922.8" r="10" fill="#00ae42"/>
<path d="M1113.1 922.8 L1119 918.5 L1119 927 Z" fill="#fff"/>
</svg>
<div class="lbl" style="left:1118.8px;top:913.3px;width:18.2px;height:19.3px;font-size:13px;line-height:19.3px;padding-right:2px">6</div>
<!-- view cube -->
<svg class="abs" style="will-change:transform;left:10px;top:835px" width="120" height="110" viewBox="10 835 120 110">
<path d="M28.2 858.3 L90.4 856.4 L103 863.9 L103.6 928 L47.7 930.6 L28.2 921.1 Z" fill="#c5c5c5"/>
<path d="M28.2 858.3 L90.4 856.4 L103 863.9 L40 864.6 Z" fill="#c8c8c8"/>
<path d="M32 888 L33.5 895 M34.5 890 L36.5 898 M33 893 L36 896" stroke="#777" stroke-width=".7" fill="none"/>
<path d="M61 860.4 L70 860.2 M62 861.6 L69 861.4" stroke="#666" stroke-width=".7" fill="none"/>
<path d="M83 915 L101 927 M84 918 L97 917 L92 926 Z" stroke="#aaa" stroke-width=".7" fill="none"/>
<path d="M102.8 928 L102.8 869.5 L98.6 870 L104.3 858.9 L110.3 870 L106.2 869.5 L106.2 928 Z" fill="#7c7cc0"/>
<path d="M103.6 926.6 L103.6 930 L47.7 931.3 L47.7 935.3 L35.8 929.9 L47.7 923.6 L47.7 928.6 Z" fill="#6cc07c"/>
<text x="72.9" y="901" font-size="12.5" fill="#505050" text-anchor="middle" font-family="Liberation Sans, sans-serif">Sol</text>
<text x="103.3" y="849" font-size="12" fill="#7c7cc0" text-anchor="middle" font-family="Liberation Sans, sans-serif">z</text>
<text x="22.2" y="934" font-size="13" fill="#6cc07c" text-anchor="middle" font-family="Liberation Sans, sans-serif">y</text>
</svg>
<!-- fit view button -->
<svg class="abs" style="left:136px;top:904px" width="42" height="42" viewBox="136 904 42 42">
<ellipse cx="157" cy="943.6" rx="5" ry=".7" fill="#d8d8d8"/>
<circle cx="157" cy="924.9" r="18" fill="#fafafa"/>
<g fill="none" stroke="#565a59" stroke-width="1.7" stroke-linecap="round" stroke-linejoin="round">
<path d="M146.8 921 V918.6 Q146.8 915.6 149.8 915.6 H152.6"/>
<path d="M160.6 915.6 H163.3 Q166.3 915.6 166.3 918.6 V921"/>
<path d="M166.3 929.6 V931.8 Q166.3 934.8 163.3 934.8 H160.6"/>
<path d="M152.6 934.8 H149.8 Q146.8 934.8 146.8 931.8 V929.6"/>
<path d="M156.5 918.6 L162.3 921.8 V928 L156.5 931.4 L150.9 928 V921.8 Z"/>
<path d="M151.1 922 L156.5 924.8 L162.1 922 M156.5 924.8 V931.2"/>
</g>
</svg>

</div>
</body>
</html>
